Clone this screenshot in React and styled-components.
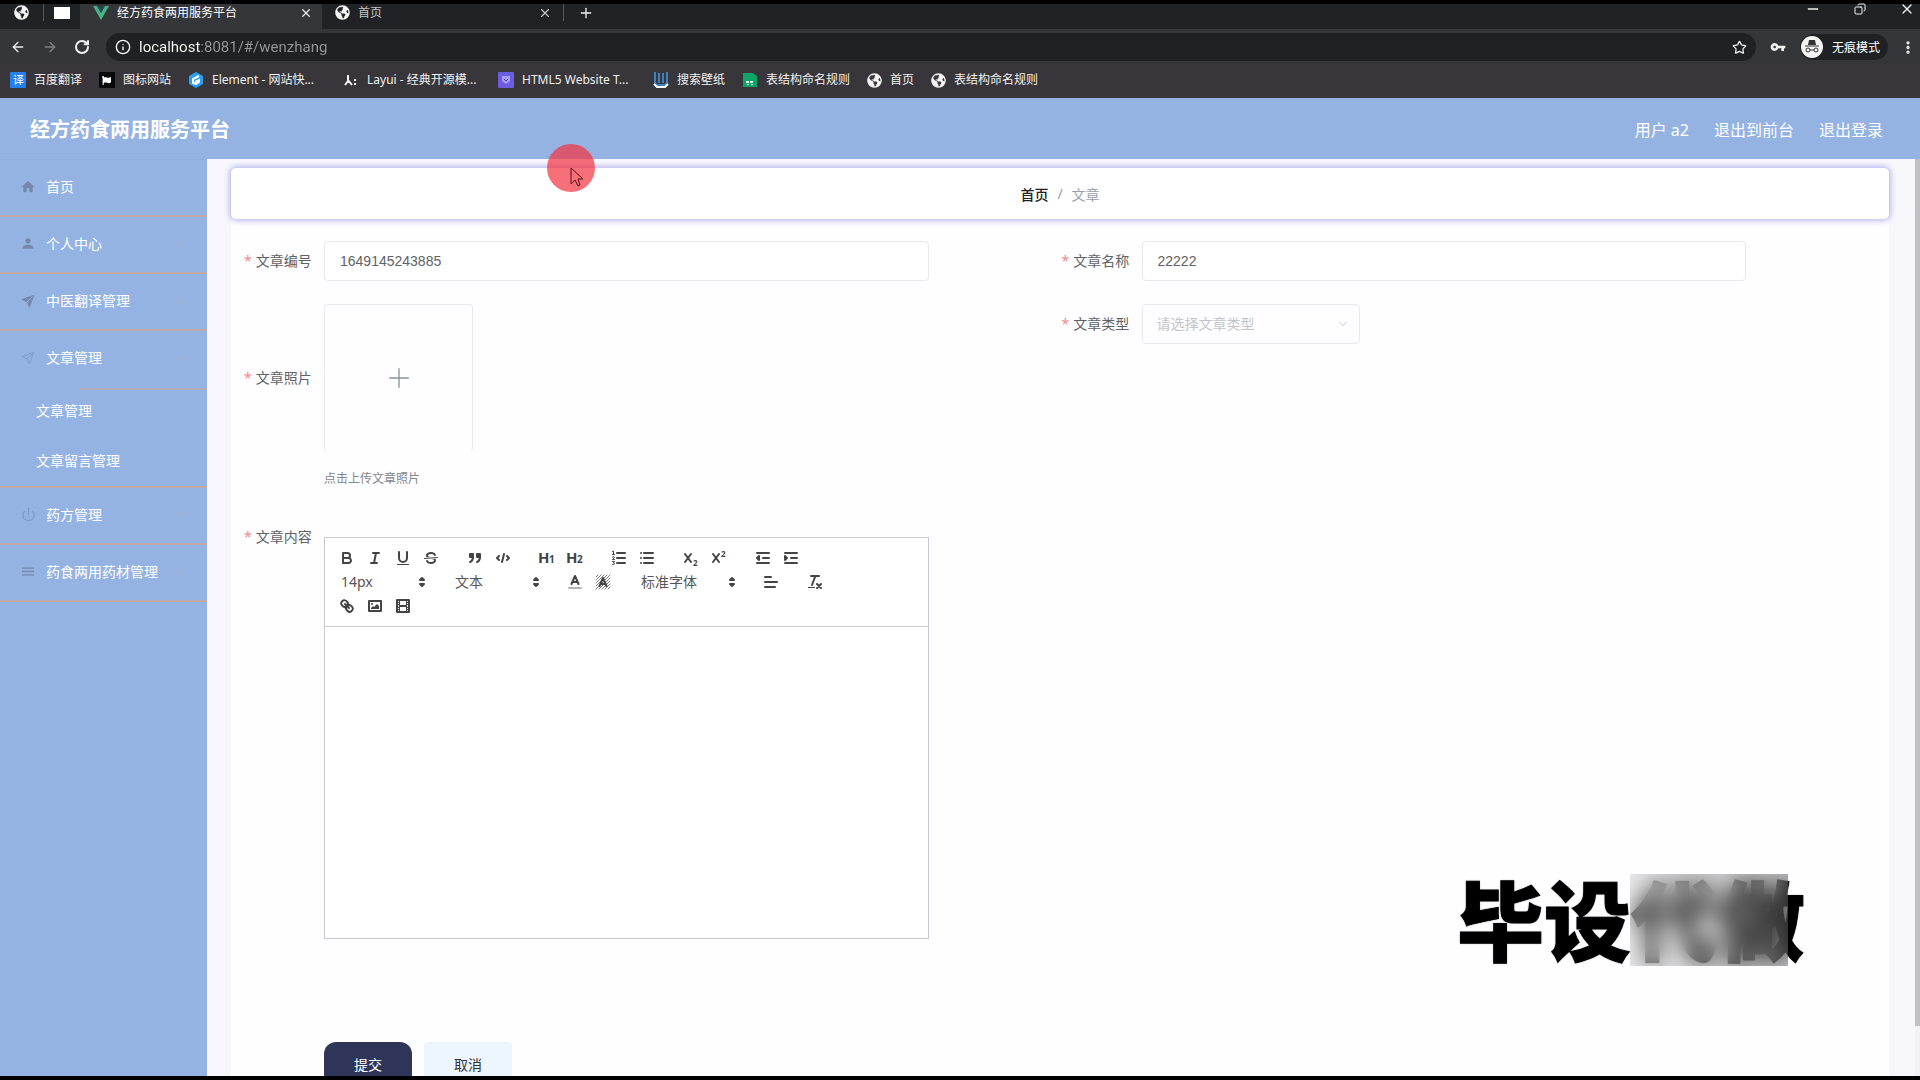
import React from "react";
import styled, { createGlobalStyle } from "styled-components";
import {
  ArrowLeft,
  ArrowRight,
  ChevronDown,
  Copy,
  EllipsisVertical,
  Info,
  Minus,
  Plus,
  RotateCw,
  Star,
  X,
} from "lucide-react";
import { FaGlobeAmericas, FaFlag } from "react-icons/fa";
import {
  MdHome,
  MdPerson,
  MdMenu,
  MdVpnKey,
} from "react-icons/md";
import { IoPaperPlane, IoPaperPlaneOutline } from "react-icons/io5";
import { LuPower } from "react-icons/lu";

const GlobalStyle = createGlobalStyle`
  * {
    box-sizing: border-box;
  }

  body {
    margin: 0;
    background: #000;
    font-family: "Noto Sans", "Noto Sans CJK SC", sans-serif;
    font-size: 14px;
  }

  button, input, select {
    font-family: inherit;
    margin: 0;
  }

  a {
    color: inherit;
    text-decoration: none;
  }
`;

const Screen = styled.div`
  height: 100vh;
  padding: 4px 0;
  display: flex;
  flex-direction: column;
  overflow: hidden;
  background: #000;
`;

/* ---------- browser ---------- */

const IconButton = styled.button`
  border: none;
  padding: 0;
  background: none;
  color: ${(props) => props.$color || "#f1f1f1"};
  display: flex;
  align-items: center;
  justify-content: center;
  width: ${(props) => props.$width || 16}px;
  height: 16px;
  flex: none;
`;

const TabStrip = styled.div`
  height: 25px;
  flex: none;
  display: flex;
  background: #202225;
  color: #fff;
`;

const PinnedTab = styled.div`
  width: ${(props) => props.$width}px;
  height: 17px;
  display: flex;
  align-items: center;
  justify-content: center;
  border-right: ${(props) => (props.$divider ? "1px solid #5a5b5e" : "none")};
`;

const BlankPage = styled.span`
  width: 16px;
  height: 12px;
  background: #fff;
`;

const Tab = styled.div`
  width: ${(props) => props.$width}px;
  height: 25px;
  padding: 0 8px 8px 13px;
  display: flex;
  align-items: center;
  gap: 8px;
  font-size: 12px;
  line-height: 17px;
  color: ${(props) => (props.$active ? "#fff" : "#c4c6c9")};
  background: ${(props) => (props.$active ? "#35363a" : "transparent")};

  & span {
    flex: 1;
    white-space: nowrap;
  }
`;

const NewTab = styled.div`
  height: 17px;
  padding-left: 14px;
  margin-left: 2px;
  border-left: 1px solid #5a5b5e;
  display: flex;
  align-items: center;
`;

const WindowControls = styled.div`
  margin-left: auto;
  height: 10px;
  padding-right: 5px;
  display: flex;
  align-items: center;
  gap: 31px;
`;

const AddressRow = styled.div`
  height: 36px;
  flex: none;
  padding: 4px 4px 4px 10px;
  display: flex;
  align-items: center;
  background: #35363a;
  color: #fff;
`;

const NavButtons = styled.div`
  display: flex;
  gap: 16px;
  margin-right: 16px;
`;

const AddressBar = styled.div`
  flex: 1;
  height: 28px;
  padding: 0 9px;
  border-radius: 14px;
  background: #202124;
  display: flex;
  align-items: center;
  gap: 8px;
`;

const AddressInput = styled.input`
  flex: 1;
  border: none;
  padding: 0;
  outline: none;
  font-family: Roboto, sans-serif;
  font-size: 15px;
  line-height: 24px;
  color: transparent;
  background: linear-gradient(90deg, #fff 61px, #96989b 61px);
  background-clip: text;
`;

const Incognito = styled.div`
  width: 88px;
  height: 26px;
  margin-right: 12px;
  border-radius: 13px;
  background: #202124;
  display: flex;
  align-items: center;
  gap: 8px;
  font-size: 12px;
  white-space: nowrap;
`;

const Bookmarks = styled.nav`
  height: 33px;
  flex: none;
  padding: 0 10px 3px;
  display: flex;
  align-items: center;
  gap: 17px;
  background: #38363a;
`;

const Bookmark = styled.a`
  width: ${(props) => (props.$long ? "138px" : "auto")};
  display: flex;
  align-items: center;
  gap: 8px;
  font-size: 12px;
  line-height: 16px;
  color: #f1f1f1;
  white-space: nowrap;

  & svg {
    flex: none;
  }
`;

/* ---------- page ---------- */

const Header = styled.header`
  height: 61px;
  flex: none;
  padding: 2px 37px 0 30px;
  display: flex;
  align-items: center;
  justify-content: space-between;
  background: #94b3e2;
  color: #fff;
`;

const Title = styled.h1`
  margin: 0;
  font-size: 20px;
  line-height: 32px;
  font-weight: 700;
`;

const UserLinks = styled.div`
  display: flex;
  gap: 25px;
  font-size: 16px;
  line-height: 24px;
`;

const Body = styled.div`
  flex: 1;
  min-height: 0;
  display: flex;
`;

const Sidebar = styled.nav`
  width: 207px;
  flex: none;
  background: #95b3e2;
  border-top: 1px solid #8eabd9;
  color: #fff;
`;

const Menu = styled.ul`
  margin: 0;
  padding: 0;
  list-style: none;
`;

const MenuItem = styled.li`
  border-bottom: 2px solid #bfa9a5;
`;

const MenuLink = styled.a`
  height: 55px;
  padding: 0 20px 2px;
  display: flex;
  align-items: center;
  gap: 10px;
  line-height: 20px;

  & > svg {
    margin-left: auto;
    color: #a9b2c6;
  }

  & span {
    white-space: nowrap;
  }
`;

const MenuIcon = styled.i`
  width: 16px;
  display: flex;
  justify-content: center;
  color: ${(props) => (props.$faint ? "#7f9ac6" : "#7488ac")};
`;

const SubMenu = styled.ul`
  margin: 0;
  padding: 0;
  list-style: none;
  background: linear-gradient(90deg, transparent 80px, #b0adb8 80px) 0 2px / 100% 2px no-repeat;

  & a {
    display: block;
    height: 50px;
    line-height: 50px;
    padding-left: 36px;
  }
`;

const Main = styled.main`
  flex: 1;
  min-width: 0;
  overflow: hidden;
  padding: 9px 26px 0 24px;
  background: #f8f7fc;
`;

const Breadcrumb = styled.div`
  position: relative;
  height: 51px;
  border-radius: 5px;
  background: #fff;
  box-shadow: 0 0 6px 1px #a9a9ea;
  display: flex;
  align-items: center;
  justify-content: center;
  gap: 9px;
  color: #97a0b3;

  & a {
    color: #222;
    font-weight: 500;
  }
`;

const Form = styled.form`
  padding: 22px 10px 60px 13px;
  background: #fefdff;
  display: grid;
  grid-template-columns: 1fr 1fr;
`;

const Column = styled.div`
  display: flex;
  flex-direction: column;
  gap: 23px;
  padding-right: 133px;
`;

const Field = styled.div`
  display: flex;
  align-items: flex-start;
`;

const Label = styled.label`
  width: 80px;
  flex: none;
  padding-right: 13px;
  text-align: right;
  line-height: ${(props) => props.$height || 40}px;
  color: #606266;
  white-space: nowrap;

  &::before {
    content: "*";
    margin-right: 4px;
    color: #f08a8a;
  }
`;

const TextInput = styled.input`
  flex: 1;
  min-width: 0;
  height: 40px;
  padding: 0 15px;
  border: 1px solid #e8e8ef;
  border-radius: 4px;
  background: #fff;
  font-family: "Liberation Sans", sans-serif;
  font-size: 14px;
  color: #606266;
  outline: none;
`;

const SelectBox = styled.div`
  width: 218px;
  display: flex;
  align-items: center;

  & svg {
    margin-left: -24px;
    pointer-events: none;
  }
`;

const Select = styled.select`
  appearance: none;
  width: 218px;
  height: 40px;
  padding: 0 14px 2px;
  border: 1px solid #e8e8ef;
  border-radius: 4px;
  background: transparent;
  font-size: 14px;
  color: #c3c4cb;
`;

const UploadArea = styled.div`
  display: flex;
  flex-direction: column;
`;

const UploadBox = styled.label`
  width: 149px;
  height: 148px;
  border: 1px solid #e8e8ef;
  border-bottom-color: transparent;
  border-radius: 4px;
  display: flex;
  align-items: center;
  justify-content: center;
  color: #8c939d;

  & input {
    display: none;
  }
`;

const UploadTip = styled.span`
  margin-top: 12px;
  font-size: 12px;
  line-height: 30px;
  color: #83868c;
`;

const EditorArea = styled.div`
  flex: 1;
  padding-top: 20px;
`;

const Editor = styled.div`
  border: 1px solid #ccc8d2;
  background: #fff;
`;

const Toolbar = styled.div`
  padding: 8px;
  border-bottom: 1px solid #ccc8d2;
`;

const ToolRow = styled.div`
  height: 24px;
  display: flex;
  gap: 16px;
`;

const ToolGroup = styled.div`
  display: flex;
`;

const Tool = styled.button`
  width: 28px;
  height: 24px;
  padding: 3px 5px;
  border: none;
  background: none;
`;

const ToolIcon = styled.svg`
  display: block;
  width: 18px;
  height: 18px;
  overflow: visible;
  fill: none;
  stroke: #444;
  stroke-width: 2;
  stroke-linecap: round;
  stroke-linejoin: round;

  & .thin {
    stroke-width: 1;
  }

  & .fill {
    fill: #444;
  }

  & .solid {
    fill: #444;
    stroke: none;
  }

  & text {
    fill: #444;
    stroke: none;
    font-family: "Open Sans", sans-serif;
    font-weight: 700;
  }
`;

const Picker = styled.div`
  width: ${(props) => props.$width}px;
  height: 24px;
  display: flex;
  align-items: center;

  & select {
    appearance: none;
    width: 100%;
    height: 24px;
    padding: 0 8px 2px;
    border: none;
    background: none;
    font-size: 14px;
    color: #555;
  }

  & svg {
    flex: none;
    margin-left: -18px;
    pointer-events: none;
  }
`;

const EditorText = styled.div`
  height: 311px;
  outline: none;
`;

const Actions = styled.div`
  padding: 80px 0 0 80px;
  display: flex;
  gap: 12px;
`;

const ActionButton = styled.button`
  width: 88px;
  height: 44px;
  border: none;
  border-radius: ${(props) => (props.$primary ? 12 : 4)}px;
  background: ${(props) => (props.$primary ? "#2f3558" : "#edf6ff")};
  color: ${(props) => (props.$primary ? "#fff" : "#333")};
  font-size: 14px;
`;

const ScrollTrack = styled.div`
  width: 5px;
  flex: none;
  background: #f3f1f6;
`;

const ScrollThumb = styled.div`
  height: 867px;
  max-height: 95%;
  background: #c1c1c3;
`;

/* ---------- overlays ---------- */

const Pointer = styled.div`
  position: absolute;
  left: 547px;
  top: 144px;
  width: 48px;
  height: 48px;
  border-radius: 50%;
  background: rgba(244, 50, 62, 0.7);

  & svg {
    display: block;
    margin: 23px 0 0 23px;
  }
`;

const Watermark = styled.div`
  position: absolute;
  right: 115px;
  bottom: 113px;
  font-family: "Noto Sans CJK SC", sans-serif;
  font-size: 87px;
  line-height: 100px;
  font-weight: 900;
  color: #000;
  -webkit-text-stroke: 1px #000;
  text-shadow: 0 0 2px #888;
  white-space: nowrap;
`;

const BlurPatch = styled.div`
  position: absolute;
  right: 132px;
  bottom: 114px;
  width: 158px;
  height: 92px;
  background: linear-gradient(90deg, rgba(200, 200, 200, 0.4), rgba(100, 100, 100, 0.4));
  backdrop-filter: blur(11px);
`;

const LIST_ROWS = [4, 9, 14];

const toolIcons = {
  bold: (
    <>
      <path d="M5,4H9.5A2.5,2.5,0,0,1,12,6.5v0A2.5,2.5,0,0,1,9.5,9H5Z" />
      <path d="M5,9h5.5A2.5,2.5,0,0,1,13,11.5v0A2.5,2.5,0,0,1,10.5,14H5Z" />
    </>
  ),
  italic: <path d="M7,4H13M5,14H11M8,14L10,4" />,
  underline: (
    <>
      <path d="M5,3V9a4,4,0,0,0,8,0V3" />
      <rect className="solid" x="3" y="15" width="12" height="1" />
    </>
  ),
  strike: (
    <>
      <path className="thin" d="M15.5,8.5L2.5,9.5" />
      <path className="solid" d="M9.007,8C6.542,7.791,6,7.519,6,6.5,6,5.792,7.283,5,9,5c1.571,0,2.765.679,2.969,1.309a1,1,0,0,0,1.9-.617C13.356,4.106,11.354,3,9,3,6.2,3,4,4.538,4,6.5a3.2,3.2,0,0,0,.5,1.843Z" />
      <path className="solid" d="M8.984,10C11.457,10.208,12,10.479,12,11.5c0,0.708-1.283,1.5-3,1.5-1.571,0-2.765-.679-2.969-1.309a1,1,0,1,0-1.9.617C4.644,13.894,6.646,15,9,15c2.8,0,5-1.538,5-3.5a3.2,3.2,0,0,0-.5-1.843Z" />
    </>
  ),
  quote: (
    <>
      <rect className="fill" x="4" y="5" width="3" height="3" />
      <rect className="fill" x="11" y="5" width="3" height="3" />
      <path className="fill" d="M7,8c0,4.031-3,5-3,5" />
      <path className="fill" d="M14,8c0,4.031-3,5-3,5" />
    </>
  ),
  code: <path d="M5,7L3,9L5,11M13,7L15,9L13,11M10,5L8,13" />,
  h1: (
    <>
      <text x="0" y="14" fontSize="15">H</text>
      <text x="11" y="14" fontSize="10">1</text>
    </>
  ),
  h2: (
    <>
      <text x="0" y="14" fontSize="15">H</text>
      <text x="11" y="14" fontSize="10">2</text>
    </>
  ),
  ordered: (
    <>
      {LIST_ROWS.map((y) => <path key={y} d={`M7,${y}H15`} />)}
      <path className="thin" d="M2.5,2.5L3.5,2V5.500M2.500,5.500H4.500M2.500,8Q4.500,7 4.500,8.500L2.500,10.500H4.500M2.500,12.500H4.500L3.500,14Q4.500,14 4.500,15Q3.500,16 2.500,15.500" />
    </>
  ),
  bullet: LIST_ROWS.map((y) => <path key={y} d={`M6,${y}H15M3,${y}H3`} />),
  sub: (
    <>
      <path d="M3,5L9,13M9,5L3,13" />
      <text x="11" y="17" fontSize="8">2</text>
    </>
  ),
  sup: (
    <>
      <path d="M3,5L9,13M9,5L3,13" />
      <text x="11" y="8" fontSize="8">2</text>
    </>
  ),
  outdent: (
    <>
      <path d="M3,4H15M3,14H15M9,9H15" />
      <path className="fill" d="M5,7V11L3,9Z" />
    </>
  ),
  indent: (
    <>
      <path d="M3,4H15M3,14H15M9,9H15" />
      <path className="fill" d="M3,7V11L5,9Z" />
    </>
  ),
  color: (
    <>
      <path d="M3,15H15" opacity="0.4" />
      <path d="M5.5,11L9,3L12.5,11M11.600,9H6.400" />
    </>
  ),
  background: (
    <>
      <path
        className="thin"
        opacity="0.7"
        d="M2,4L4,2M2,7L7,2M2,10L10,2M2,13L13,2M2,16L16,2M5,16L16,5M8,16L16,8M11,16L16,11M14,16L16,14"
      />
      <path d="M5.500,13L9,5L12.500,13M11.600,11H6.400" />
    </>
  ),
  align: <path d="M3,4H9M3,9H15M3,14H13" />,
  clean: (
    <>
      <path d="M5,3H13M6,12L9.350,3M11,11L15,15M15,11L11,15" />
      <rect className="solid" x="2" y="14" width="7" height="1" />
    </>
  ),
  link: (
    <>
      <path d="M7,7L11,11" />
      <path d="M8.9,4.577a3.476,3.476,0,0,1,.36,4.679A3.476,3.476,0,0,1,4.577,8.9C3.185,7.5,2.035,6.4,4.217,4.217S7.5,3.185,8.9,4.577Z" />
      <path d="M13.423,9.1a3.476,3.476,0,0,0-4.679-.36,3.476,3.476,0,0,0,.36,4.679c1.392,1.392,2.5,2.542,4.679.36S14.815,10.5,13.423,9.1Z" />
    </>
  ),
  image: (
    <>
      <rect x="3" y="4" width="12" height="10" />
      <circle className="solid" cx="6" cy="7" r="1" />
      <path className="solid" d="M5,12V11L7,9L8,10L11,7L13,9V12Z" />
    </>
  ),
  video: (
    <>
      <rect x="3" y="3" width="12" height="12" />
      <path className="solid" d="M5,3H6V15H5ZM12,3H13V15H12ZM5,8H13V10H5ZM3,5H6V6H3ZM3,7H6V8H3ZM3,10H6V11H3ZM3,12H6V13H3ZM12,5H15V6H12ZM12,7H15V8H12ZM12,10H15V11H12ZM12,12H15V13H12Z" />
    </>
  ),
};

const menu = [
  { text: "首页", icon: <MdHome size={18} /> },
  { text: "个人中心", icon: <MdPerson size={19} />, arrow: true },
  { text: "中医翻译管理", icon: <IoPaperPlane size={14} />, arrow: true },
  {
    text: "文章管理",
    icon: <IoPaperPlaneOutline size={14} />,
    arrow: true,
    faint: true,
    children: ["文章管理", "文章留言管理"],
  },
  { text: "药方管理", icon: <LuPower size={15} />, arrow: true, faint: true },
  { text: "药食两用药材管理", icon: <MdMenu size={19} />, arrow: true },
];

function Globe() {
  return <FaGlobeAmericas size={15} color="#f5f5f5" />;
}

function TileIcon({ bg, children }) {
  return (
    <svg width="16" height="16" viewBox="0 0 16 16">
      <rect width="16" height="16" rx="1" fill={bg} />
      {children}
    </svg>
  );
}

const bookmarks = [
  {
    text: "百度翻译",
    icon: (
      <TileIcon bg="#2580ea">
        <text x="3" y="12" fontSize="11" fill="#fff">译</text>
      </TileIcon>
    ),
  },
  {
    text: "图标网站",
    icon: (
      <TileIcon bg="#080808">
        <FaFlag x="3" y="4" size={9} color="#fff" />
      </TileIcon>
    ),
  },
  {
    text: "Element - 网站快...",
    long: true,
    icon: (
      <svg width="16" height="16" viewBox="0 0 16 16">
        <path d="M8,0L15,4V12L8,16L1,12V4Z" fill="#2ba0f0" />
        <path d="M11,4L5,7V11L8,12L11,10V8L7,10" stroke="#fff" strokeWidth="2" fill="none" />
      </svg>
    ),
  },
  {
    text: "Layui - 经典开源模...",
    long: true,
    icon: (
      <svg width="16" height="16" viewBox="0 0 16 16">
        <path d="M5,3V9L2,13M5,8L9,13M12,7V9M12,11V13" stroke="#f5f5f5" strokeWidth="2" fill="none" />
      </svg>
    ),
  },
  {
    text: "HTML5 Website T...",
    long: true,
    icon: (
      <TileIcon bg="#6b5ce0">
        <path d="M4,4H12V9L8,12L4,9Z" fill="#a99df5" />
        <path d="M6,7L8,9L10,7" stroke="#4a3bb5" fill="none" />
      </TileIcon>
    ),
  },
  {
    text: "搜索壁纸",
    icon: (
      <svg width="16" height="16" viewBox="0 0 16 16">
        <path d="M2,0V10Q2,13 5,13H11Q14,13 14,10V0M6,1V11M10,1V11" stroke="#3c83bd" strokeWidth="2" fill="none" />
        <path d="M1,12L4,15H12L15,12" stroke="#fff" strokeWidth="2" fill="none" />
      </svg>
    ),
  },
  {
    text: "表结构命名规则",
    icon: (
      <svg width="16" height="16" viewBox="0 0 16 16">
        <path d="M1,1H11L15,4V15H1Z" fill="#0ca566" />
        <path d="M4,9H7V11H4ZM8,9H11V11H8ZM5,12H7V13H5ZM9,12H11V13H9Z" fill="#d8f5e8" />
      </svg>
    ),
  },
  { text: "首页", icon: <Globe /> },
  { text: "表结构命名规则", icon: <Globe /> },
];

function Browser() {
  return (
    <>
      <TabStrip>
        <PinnedTab $width={44} $divider><Globe /></PinnedTab>
        <PinnedTab $width={36}><BlankPage /></PinnedTab>
        <Tab $width={242} $active>
          <svg width="16" height="16" viewBox="0 0 16 16">
            <path d="M0,1H4L8,8L12,1H16L8,15Z" fill="#41b883" />
            <path d="M4,1H6L8,4L10,1H12L8,8Z" fill="#35495e" />
          </svg>
          <span>经方药食两用服务平台</span>
          <IconButton aria-label="关闭标签页"><X size={14} /></IconButton>
        </Tab>
        <Tab $width={239}>
          <Globe />
          <span>首页</span>
          <IconButton $color="#c4c6c9" aria-label="关闭标签页"><X size={14} /></IconButton>
        </Tab>
        <NewTab>
          <IconButton aria-label="新标签页"><Plus size={18} /></IconButton>
        </NewTab>
        <WindowControls>
          <IconButton aria-label="最小化"><Minus size={16} strokeWidth={2} /></IconButton>
          <IconButton aria-label="还原">
            <Copy size={12} strokeWidth={2} transform="scale(-1 1)" />
          </IconButton>
          <IconButton aria-label="关闭"><X size={18} strokeWidth={2} /></IconButton>
        </WindowControls>
      </TabStrip>
      <AddressRow>
        <NavButtons>
          <IconButton aria-label="后退"><ArrowLeft size={18} /></IconButton>
          <IconButton aria-label="前进" $color="#7f8184"><ArrowRight size={18} /></IconButton>
          <IconButton aria-label="刷新"><RotateCw size={16} strokeWidth={3} /></IconButton>
        </NavButtons>
        <AddressBar>
          <Info size={16} />
          <AddressInput aria-label="地址" defaultValue="localhost:8081/#/wenzhang" />
          <IconButton aria-label="收藏"><Star size={15} /></IconButton>
        </AddressBar>
        <IconButton aria-label="密码" $width={44}><MdVpnKey size={16} /></IconButton>
        <Incognito>
          <svg width="24" height="24" viewBox="0 0 24 24">
            <circle cx="12" cy="12" r="11" fill="#f4f4f4" />
            <path d="M8,10L9,5H15L16,10Z" fill="#333" />
            <path d="M5,11H19M10,15H14" stroke="#333" />
            <circle cx="8" cy="15" r="2" fill="none" stroke="#333" />
            <circle cx="16" cy="15" r="2" fill="none" stroke="#333" />
          </svg>
          无痕模式
        </Incognito>
        <IconButton aria-label="菜单"><EllipsisVertical size={17} strokeWidth={3} /></IconButton>
      </AddressRow>
      <Bookmarks>
        {bookmarks.map((item, i) => (
          <Bookmark href="#" key={i} $long={item.long}>
            {item.icon}
            {item.text}
          </Bookmark>
        ))}
      </Bookmarks>
    </>
  );
}

function ToolButtons({ names }) {
  return (
    <ToolGroup>
      {names.map((name) => (
        <Tool type="button" key={name} aria-label={name}>
          <ToolIcon viewBox="0 0 18 18">{toolIcons[name]}</ToolIcon>
        </Tool>
      ))}
    </ToolGroup>
  );
}

function ToolPicker({ label, value, width }) {
  return (
    <Picker $width={width}>
      <select aria-label={label}>
        <option>{value}</option>
      </select>
      <ToolIcon viewBox="0 0 18 18">
        <path className="fill" d="M7,11L9,13L11,11ZM7,7L9,5L11,7Z" />
      </ToolIcon>
    </Picker>
  );
}

function ArticleForm() {
  return (
    <Form>
      <Column>
        <Field>
          <Label htmlFor="number">文章编号</Label>
          <TextInput id="number" defaultValue="1649145243885" />
        </Field>
        <Field>
          <Label htmlFor="photo" $height={148}>文章照片</Label>
          <UploadArea>
            <UploadBox>
              <Plus size={32} strokeWidth={1} />
              <input id="photo" type="file" />
            </UploadBox>
            <UploadTip>点击上传文章照片</UploadTip>
          </UploadArea>
        </Field>
        <Field>
          <Label as="span" id="content-label">文章内容</Label>
          <EditorArea>
            <Editor>
              <Toolbar>
                <ToolRow>
                  <ToolButtons names={["bold", "italic", "underline", "strike"]} />
                  <ToolButtons names={["quote", "code"]} />
                  <ToolButtons names={["h1", "h2"]} />
                  <ToolButtons names={["ordered", "bullet"]} />
                  <ToolButtons names={["sub", "sup"]} />
                  <ToolButtons names={["outdent", "indent"]} />
                </ToolRow>
                <ToolRow>
                  <ToolPicker label="字号" value="14px" width={98} />
                  <ToolPicker label="标题" value="文本" width={98} />
                  <ToolButtons names={["color", "background"]} />
                  <ToolPicker label="字体" value="标准字体" width={108} />
                  <ToolButtons names={["align"]} />
                  <ToolButtons names={["clean"]} />
                </ToolRow>
                <ToolRow>
                  <ToolButtons names={["link", "image", "video"]} />
                </ToolRow>
              </Toolbar>
              <EditorText
                contentEditable
                suppressContentEditableWarning
                role="textbox"
                aria-labelledby="content-label"
              />
            </Editor>
          </EditorArea>
        </Field>
        <Actions>
          <ActionButton type="button" $primary>提交</ActionButton>
          <ActionButton type="button">取消</ActionButton>
        </Actions>
      </Column>
      <Column>
        <Field>
          <Label htmlFor="name">文章名称</Label>
          <TextInput id="name" defaultValue="22222" />
        </Field>
        <Field>
          <Label htmlFor="type">文章类型</Label>
          <SelectBox>
            <Select id="type">
              <option>请选择文章类型</option>
            </Select>
            <ChevronDown size={14} color="#dcdde2" />
          </SelectBox>
        </Field>
      </Column>
    </Form>
  );
}

function App() {
  return (
    <Screen>
      <GlobalStyle />
      <Browser />
      <Header>
        <Title>经方药食两用服务平台</Title>
        <UserLinks>
          <span>用户 a2</span>
          <a href="#">退出到前台</a>
          <a href="#">退出登录</a>
        </UserLinks>
      </Header>
      <Body>
        <Sidebar>
          <Menu>
            {menu.map((item) => (
              <MenuItem key={item.text}>
                <MenuLink href="#">
                  <MenuIcon $faint={item.faint}>{item.icon}</MenuIcon>
                  <span>{item.text}</span>
                  {item.arrow && <ChevronDown size={12} />}
                </MenuLink>
                {item.children && (
                  <SubMenu>
                    {item.children.map((child) => (
                      <li key={child}><a href="#">{child}</a></li>
                    ))}
                  </SubMenu>
                )}
              </MenuItem>
            ))}
          </Menu>
        </Sidebar>
        <Main>
          <Breadcrumb>
            <a href="#">首页</a>
            <span>/</span>
            <span>文章</span>
          </Breadcrumb>
          <ArticleForm />
        </Main>
        <ScrollTrack>
          <ScrollThumb />
        </ScrollTrack>
      </Body>
      <Pointer>
        <svg width="14" height="20" viewBox="0 0 14 20">
          <path d="M1,1V17L5,13L8,19L10,18L8,12H13Z" fill="none" stroke="#5c0c12" />
        </svg>
      </Pointer>
      <Watermark>毕设代做</Watermark>
      <BlurPatch />
    </Screen>
  );
}

export default App;
